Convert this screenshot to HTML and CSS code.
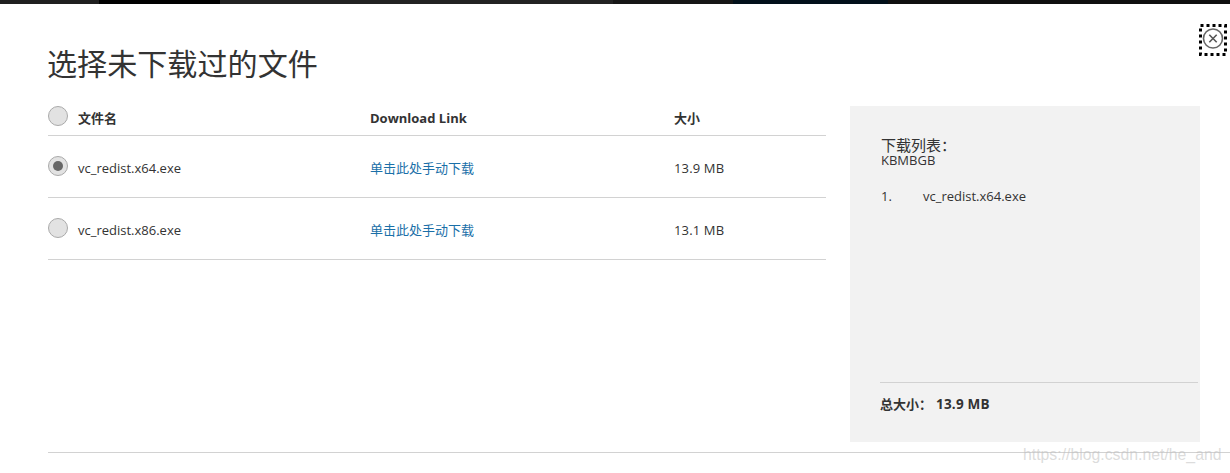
FILE: index.html
```html
<!DOCTYPE html>
<html lang="zh-CN">
<head>
<meta charset="utf-8">
<title>选择未下载过的文件</title>
<link rel="stylesheet" href="styles.css">
</head>
<body>
<div class="strip">
  <span class="seg seg-a"></span><span class="seg seg-b"></span><span class="seg seg-c"></span><span class="seg seg-d"></span><span class="seg seg-e"></span><span class="seg seg-f"></span>
</div>
<div class="dialog">
  <header class="head">
    <h1 class="title">选择未下载过的文件</h1>
    <button class="close" aria-label="关闭">
      <svg width="28" height="32" viewBox="0 0 28 32">
        <rect x="1.5" y="1.5" width="25" height="29" fill="none" stroke="#000" stroke-width="3" stroke-dasharray="3 3"/>
        <circle cx="14" cy="14.5" r="9.5" fill="none" stroke="#666" stroke-width="1.6"/>
        <path d="M10.3 10.8l7.4 7.4M17.7 10.8l-7.4 7.4" fill="none" stroke="#555" stroke-width="1.6"/>
      </svg>
    </button>
  </header>
  <div class="main">
    <section class="files">
      <div class="row row-head">
        <span class="radio"></span>
        <span class="c-name">文件名</span>
        <span class="c-link">Download Link</span>
        <span class="c-size">大小</span>
      </div>
      <div class="row">
        <span class="radio radio-on"></span>
        <span class="c-name">vc_redist.x64.exe</span>
        <a class="c-link link" href="#">单击此处手动下载</a>
        <span class="c-size">13.9 MB</span>
      </div>
      <div class="row">
        <span class="radio"></span>
        <span class="c-name">vc_redist.x86.exe</span>
        <a class="c-link link" href="#">单击此处手动下载</a>
        <span class="c-size">13.1 MB</span>
      </div>
    </section>
    <aside class="panel">
      <div class="panel-top">
        <div class="panel-title">下载列表：</div>
        <div class="panel-sub">KBMBGB</div>
        <ol class="list">
          <li class="item"><span class="num">1.</span><span>vc_redist.x64.exe</span></li>
        </ol>
      </div>
      <div class="total"><span class="total-label">总大小：</span><span class="total-value">13.9 MB</span></div>
    </aside>
  </div>
  <div class="foot-line"></div>
</div>
<div class="watermark">https://blog.csdn.net/he_and</div>
</body>
</html>
```

FILE: styles.css
```css
* { box-sizing: border-box; }
html, body { margin: 0; padding: 0; }
body {
  width: 1230px;
  height: 473px;
  overflow: hidden;
  background: #fff;
  color: #333;
  font-family: "Open Sans", "Noto Sans CJK SC", sans-serif;
  font-size: 13px;
  position: relative;
}
.strip { display: flex; height: 4px; background: #222; }
.seg { display: block; height: 100%; }
.seg-a { width: 99px; background: #1f1f1f; }
.seg-b { width: 121px; background: #000; }
.seg-c { width: 393px; background: #222; }
.seg-d { width: 120px; background: #161616; }
.seg-e { width: 155px; background: #02101a; }
.seg-f { flex: 1; background: #101010; }
.dialog { padding: 0 2px 0 48px; }
.head { display: flex; justify-content: space-between; align-items: flex-start; height: 102px; padding-right: 1px; }
.title { margin: 39px 0 0 -1px; font-size: 30.1px; line-height: 42px; font-weight: 400; color: #333; }
.close { margin: 20px 0 0; padding: 0; border: 0; background: none; width: 28px; height: 32px; line-height: 0; }
.main { display: flex; gap: 24px; align-items: flex-start; }
.files { width: 778px; }
.row { display: flex; align-items: center; height: 62px; border-bottom: 1px solid #d2d2d2; }
.row-head { height: 30px; font-weight: 700; align-items: flex-start; }
.row-head > span { line-height: 24px; }
.row:not(.row-head) .radio { margin-bottom: 2px; }
.row:not(.row-head) > :not(.radio) { padding-top: 2px; }
.radio {
  flex: none;
  width: 20px;
  height: 20px;
  margin-right: 10px;
  border-radius: 50%;
  border: 1px solid #aaa;
  background: #e2e2e2;
  display: flex;
  align-items: center;
  justify-content: center;
}
.radio-on::after { content: ""; width: 10px; height: 10px; border-radius: 50%; background: #666; }
.c-name { width: 292px; }
.c-link { width: 304px; }
.row:not(.row-head) .c-size { letter-spacing: 0.15px; }
.link { color: #1a6fa8; text-decoration: none; }
.panel {
  width: 350px;
  height: 336px;
  background: #f2f2f2;
  padding: 31px 2px 0 30px;
  display: flex;
  flex-direction: column;
  justify-content: space-between;
}
.panel-top { padding-left: 1px; }
.panel-title { font-size: 15px; line-height: 16px; }
.panel-sub { font-size: 13px; line-height: 14px; }
.list { list-style: none; margin: 19px 0 0; padding: 0; }
.item { display: flex; line-height: 20px; }
.num { width: 42px; }
.total { height: 60px; border-top: 1px solid #d2d2d2; padding-top: 11px; font-weight: 700; line-height: 20px; }
.total-label { margin-right: 4px; }
.total-value { font-size: 13.5px; letter-spacing: 0.2px; }
.foot-line { height: 1px; margin: 10px -2px 0 0; background: #d2d2d2; }
.watermark {
  position: absolute;
  left: 1023px;
  top: 444px;
  font-family: "Liberation Sans", sans-serif;
  font-size: 15.8px;
  line-height: 22px;
  color: rgba(190, 190, 190, 0.55);
  white-space: nowrap;
}
```
